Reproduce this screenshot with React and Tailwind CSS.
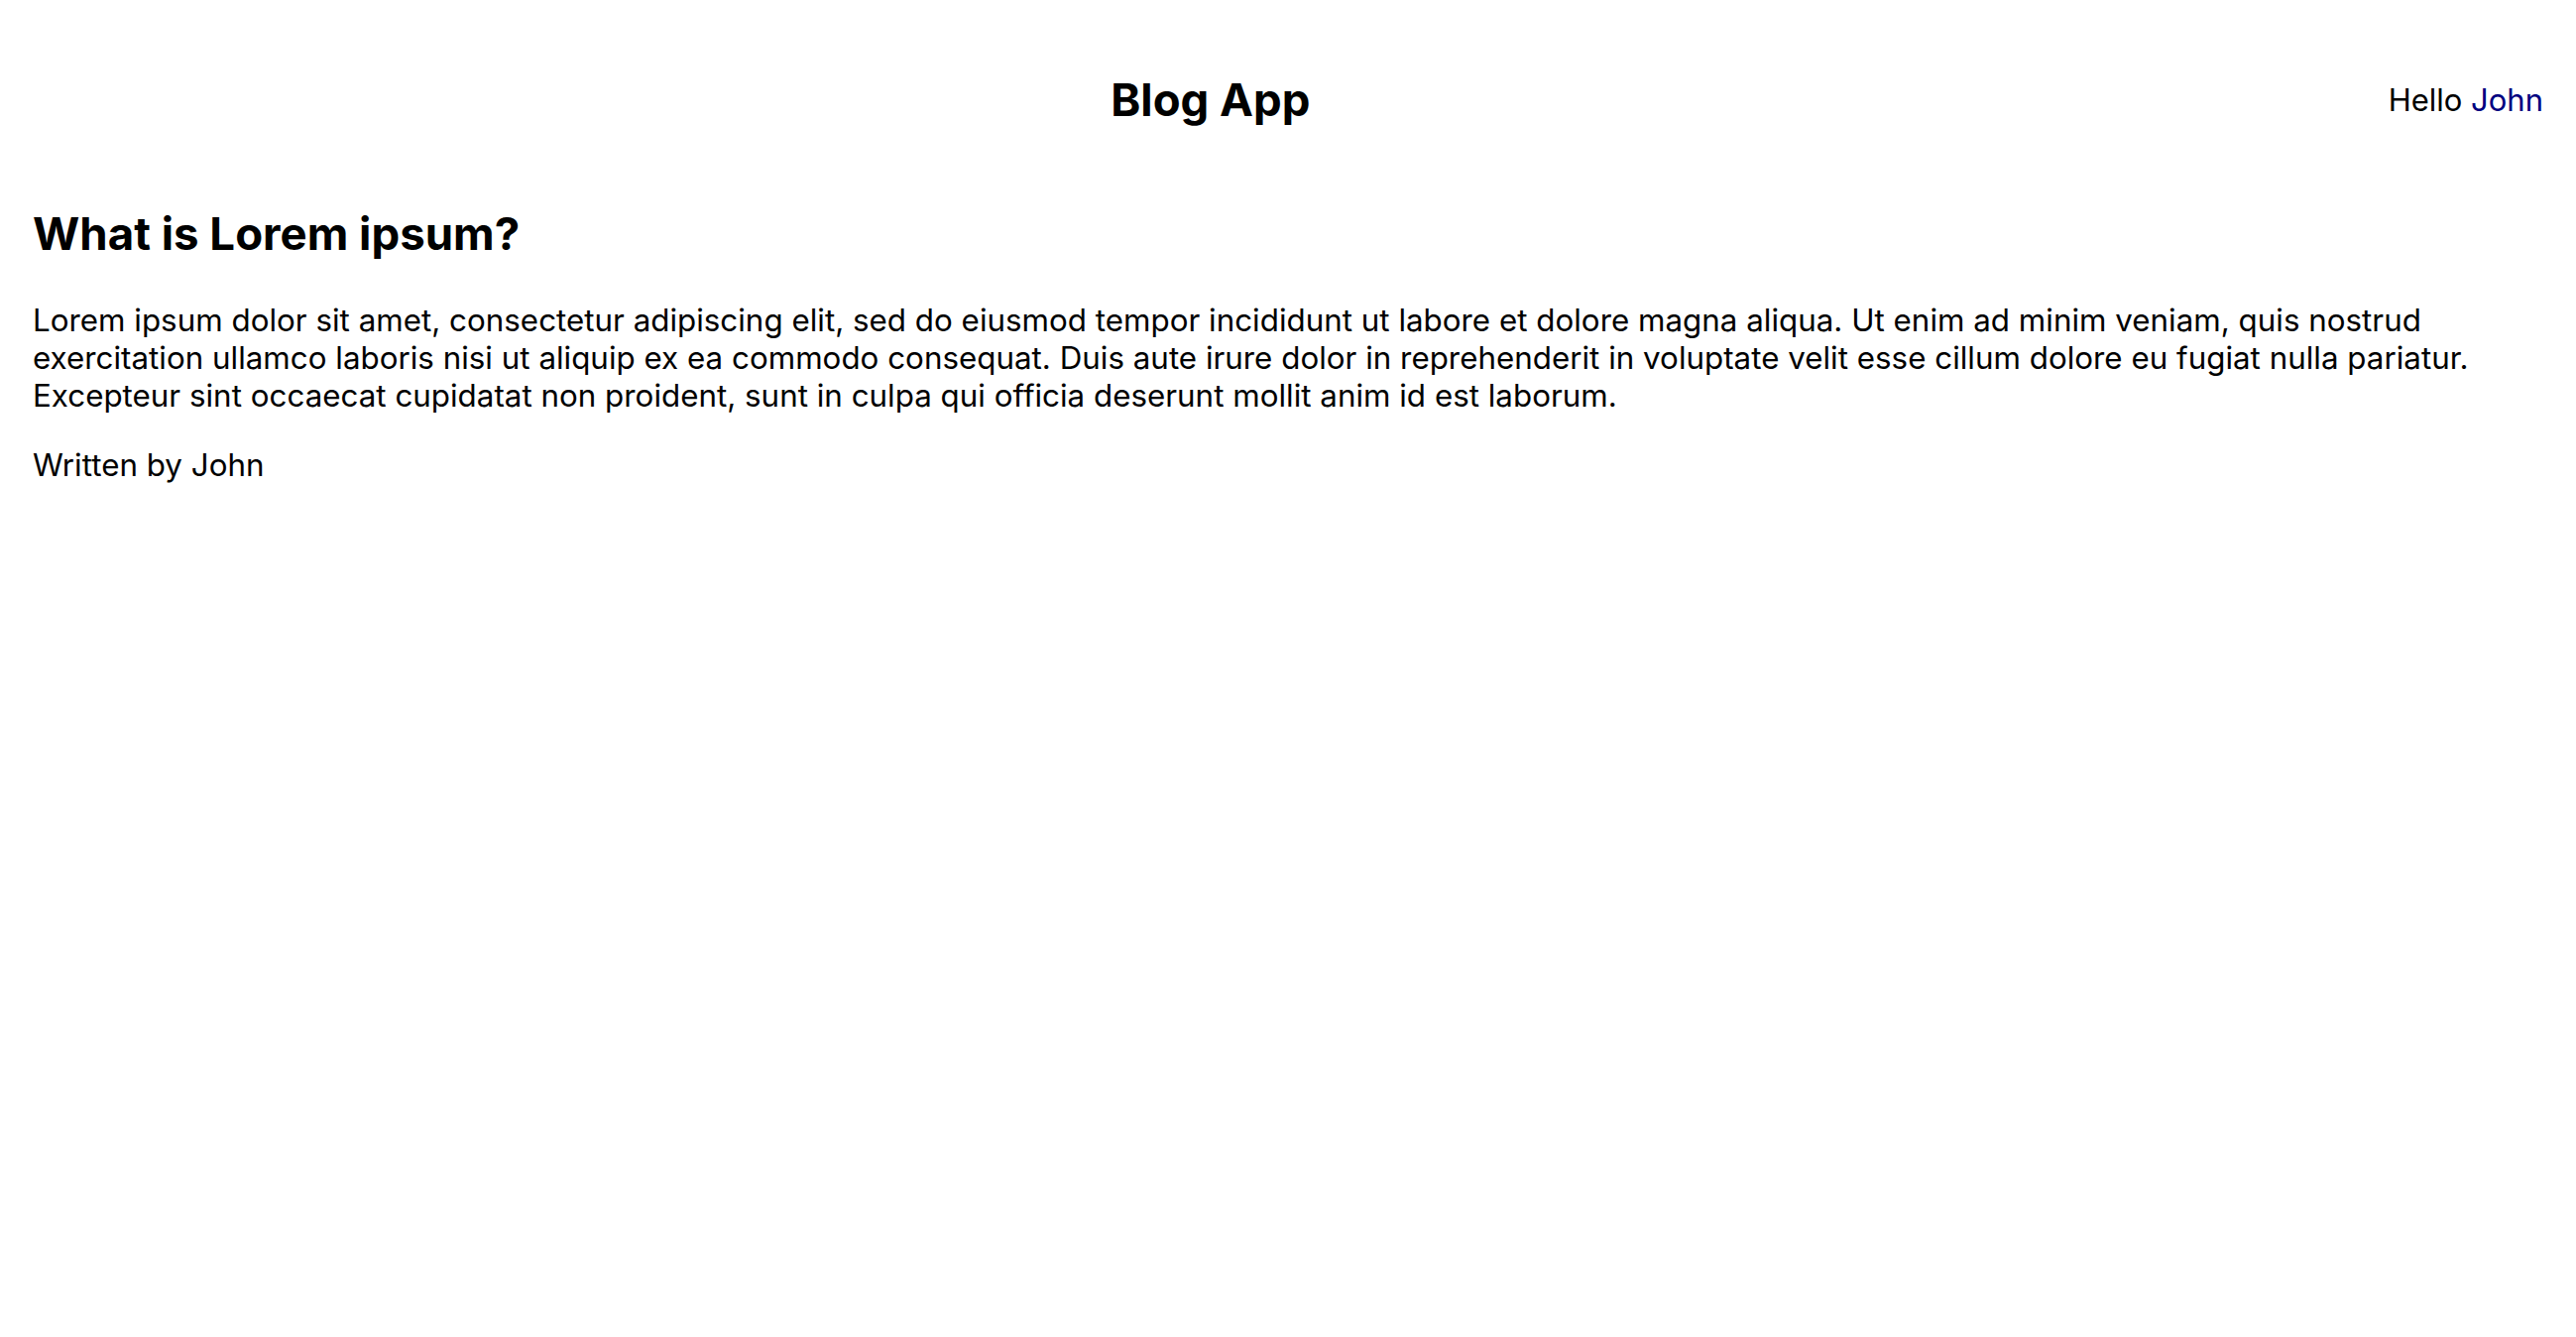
import React from "react";

const post = {
  title: "What is Lorem ipsum?",
  body:
    "Lorem ipsum dolor sit amet, consectetur adipiscing elit, sed do eiusmod tempor incididunt ut labore et dolore magna aliqua. Ut enim ad minim veniam, quis nostrud exercitation ullamco laboris nisi ut aliquip ex ea commodo consequat. Duis aute irure dolor in reprehenderit in voluptate velit esse cillum dolore eu fugiat nulla pariatur. Excepteur sint occaecat cupidatat non proident, sunt in culpa qui officia deserunt mollit anim id est laborum.",
  author: "John",
};

const App = () => {
  return (
    <div className="min-h-screen bg-white text-black font-['Inter',sans-serif]">
      {/* Header */}
      <header className="flex items-center px-[33px] pt-[76px]">
        <h1 className="flex-1 text-center text-[45.5px] leading-[50px] font-bold">
          Blog App
        </h1>
        <div className="text-[31px] leading-[38px]">
          Hello <span className="text-[#000080]">John</span>
        </div>
      </header>

      {/* Post */}
      <main className="px-[33px] pt-[83px]">
        <h2 className="text-[45.6px] leading-[54px] font-bold">{post.title}</h2>
        <p className="mt-[41px] text-[31.35px] leading-[38px]">{post.body}</p>
        <p className="mt-[32px] text-[31.35px] leading-[38px]">
          Written by {post.author}
        </p>
      </main>
    </div>
  );
};

export default App;
